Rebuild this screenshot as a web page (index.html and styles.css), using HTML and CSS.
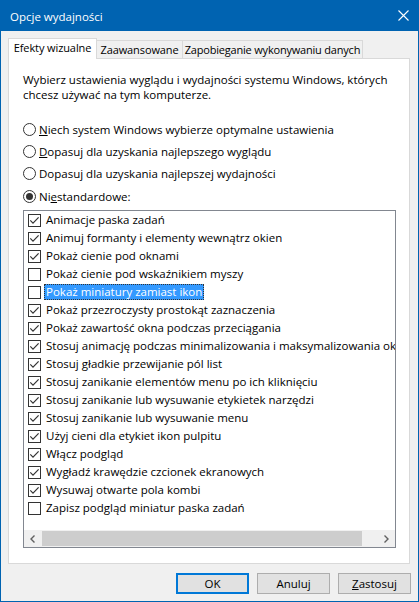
FILE: index.html
```html
<!DOCTYPE html>
<html lang="pl">
<head>
    <meta charset="UTF-8">
    <title>Opcje wydajności</title>
    <link rel="stylesheet" href="styles.css">
</head>
<body>
    <div class="window">
        <div class="titlebar">
            <span class="title">Opcje wydajności</span>
            <svg class="close" width="11" height="11" viewBox="0 0 11 11">
                <path d="M0.5 0.5 L10.5 10.5 M10.5 0.5 L0.5 10.5" stroke="#fff" stroke-width="1.1" fill="none"/>
            </svg>
        </div>

        <div class="content">
            <div class="tabs">
                <div class="tab active">Efekty wizualne</div>
                <div class="tab tab-adv">Zaawansowane</div>
                <div class="tab tab-dep">Zapobieganie wykonywaniu danych</div>
            </div>

            <div class="panel">
                <p class="intro">Wybierz ustawienia wyglądu i wydajności systemu Windows, których chcesz używać na tym komputerze.</p>

                <div class="radios">
                    <div class="radio"><span class="dot"></span><u>N</u>iech system Windows wybierze optymalne ustawienia</div>
                    <div class="radio"><span class="dot"></span><u>D</u>opasuj dla uzyskania najlepszego wyglądu</div>
                    <div class="radio"><span class="dot"></span>Dopasuj dla uzyskania najlepszej wydajności</div>
                    <div class="radio radio-last"><span class="dot on"></span>Ni<u>e</u>standardowe:</div>
                </div>

                <div class="list">
                    <div class="items" id="items"></div>
                    <div class="hscroll">
                        <div class="arrow">
                            <svg width="5" height="8" viewBox="0 0 5 8"><path d="M4.5 0.5 L1 4 L4.5 7.5" stroke="#606060" stroke-width="1.4" fill="none"/></svg>
                        </div>
                        <div class="track"><div class="thumb"></div></div>
                        <div class="arrow">
                            <svg width="5" height="8" viewBox="0 0 5 8"><path d="M0.5 0.5 L4 4 L0.5 7.5" stroke="#606060" stroke-width="1.4" fill="none"/></svg>
                        </div>
                    </div>
                </div>
            </div>

            <div class="buttons">
                <div class="btn default">OK</div>
                <div class="btn">Anuluj</div>
                <div class="btn"><u>Z</u>astosuj</div>
            </div>
        </div>
    </div>

    <script>
        // lista efektów: [tekst, zaznaczone]
        const effects = [
            ['Animacje paska zadań', true],
            ['Animuj formanty i elementy wewnątrz okien', true],
            ['Pokaż cienie pod oknami', true],
            ['Pokaż cienie pod wskaźnikiem myszy', false],
            ['Pokaż miniatury zamiast ikon', false],
            ['Pokaż przezroczysty prostokąt zaznaczenia', true],
            ['Pokaż zawartość okna podczas przeciągania', true],
            ['Stosuj animację podczas minimalizowania i maksymalizowania okien', true],
            ['Stosuj gładkie przewijanie pól list', true],
            ['Stosuj zanikanie elementów menu po ich kliknięciu', true],
            ['Stosuj zanikanie lub wysuwanie etykietek narzędzi', true],
            ['Stosuj zanikanie lub wysuwanie menu', true],
            ['Użyj cieni dla etykiet ikon pulpitu', true],
            ['Włącz podgląd', true],
            ['Wygładź krawędzie czcionek ekranowych', true],
            ['Wysuwaj otwarte pola kombi', true],
            ['Zapisz podgląd miniatur paska zadań', false]
        ];

        const items = document.getElementById('items');
        const tick = '<svg width="13" height="13" viewBox="0 0 13 13"><rect x="0.5" y="0.5" width="12" height="12" fill="#fff" stroke="#333"/>';

        effects.forEach(([text, checked], i) => {
            const row = document.createElement('div');
            row.className = 'item';
            let box = tick;
            if (checked) {
                box += '<path d="M2.3 6.4 L5 9.1 L10.6 3.4" stroke="#333" stroke-width="1.2" fill="none"/>';
            }
            box += '</svg>';
            const label = document.createElement('span');
            label.className = 'label' + (i === 4 ? ' selected' : '');
            label.textContent = text;
            row.innerHTML = box;
            row.appendChild(label);
            items.appendChild(row);
        });
    </script>
</body>
</html>
```

FILE: styles.css
```css
body {
    margin: 0;
    font-family: "Open Sans", "Noto Sans", sans-serif;
    font-size: 11.5px;
    color: #000;
}

.window {
    width: 419px;
    height: 602px;
    box-sizing: border-box;
    border: 1px solid #0063b1;
    border-top: none;
    background-color: #f0f0f0;
    display: flex;
    flex-direction: column;
}

.titlebar {
    height: 31px;
    flex-shrink: 0;
    background-color: #0063b1;
    color: #fff;
    display: flex;
    align-items: center;
    justify-content: space-between;
    padding: 0 9px 0 9px;
}

.title {
    padding-top: 1px;
}

.content {
    padding: 7px 8px 0 7px;
}

/* zakładki */
.tabs {
    display: flex;
    align-items: flex-end;
    height: 20px;
    font-size: 11px;
    letter-spacing: -0.1px;
}

.tab {
    height: 18px;
    line-height: 17px;
    box-sizing: border-box;
    border: 1px solid #d9d9d9;
    border-bottom: none;
    border-left: none;
    text-align: center;
    white-space: nowrap;
}

.tab.active {
    width: 89px;
    height: 21px;
    line-height: 18px;
    margin-bottom: -1px;
    border-left: 1px solid #d9d9d9;
    background-color: #fff;
    position: relative;
    z-index: 1;
}

.tab-adv {
    width: 86px;
}

.tab-dep {
    width: 180px;
    letter-spacing: -0.2px;
}

.panel {
    background-color: #fff;
    border: 1px solid #d9d9d9;
    padding: 13px 13px 15px 14px;
}

.intro {
    margin: 0;
    line-height: 15px;
}

/* przełączniki */
.radios {
    margin-top: 16px;
}

.radio {
    height: 22px;
    display: flex;
    align-items: center;
}

.radio-last {
    margin-top: 1px;
}

.dot {
    width: 13px;
    height: 13px;
    box-sizing: border-box;
    border: 1px solid #333;
    border-radius: 50%;
    margin-right: 3px;
    display: flex;
    align-items: center;
    justify-content: center;
    flex-shrink: 0;
}

.dot.on::after {
    content: '';
    width: 7px;
    height: 7px;
    border-radius: 50%;
    background-color: #333;
}

/* lista efektów */
.list {
    margin-top: 3px;
    height: 338px;
    box-sizing: border-box;
    border: 1px solid #828790;
    display: flex;
    flex-direction: column;
    justify-content: space-between;
    overflow: hidden;
}

.items {
    padding-left: 4px;
}

.item {
    height: 18px;
    display: flex;
    align-items: center;
    white-space: nowrap;
}

.item svg {
    flex-shrink: 0;
    margin-right: 3px;
}

.label {
    line-height: 16px;
    padding: 0 2px;
    box-sizing: border-box;
}

.label.selected {
    background-color: #3399ff;
    color: #fff;
    outline: 1px dotted #333;
    outline-offset: -1px;
}

.hscroll {
    height: 17px;
    background-color: #f0f0f0;
    display: flex;
}

.arrow {
    width: 17px;
    display: flex;
    align-items: center;
    justify-content: center;
}

.track {
    flex: 1;
    padding: 1px 0 1px 1px;
}

.thumb {
    width: 320px;
    height: 100%;
    background-color: #cdcdcd;
}

/* przyciski */
.buttons {
    display: flex;
    justify-content: flex-end;
    gap: 8px;
    margin-top: 9px;
    margin-right: -1px;
}

.btn {
    width: 73px;
    height: 21px;
    box-sizing: border-box;
    border: 1px solid #adadad;
    background-color: #e1e1e1;
    display: flex;
    align-items: center;
    justify-content: center;
}

.btn.default {
    border: 2px solid #0078d7;
}
```
